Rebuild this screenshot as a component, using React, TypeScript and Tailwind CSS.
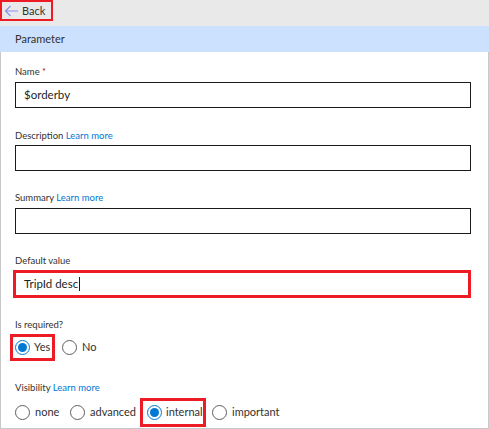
import React from 'react';

const font = { fontFamily: 'Lato, "Open Sans", "Liberation Sans", sans-serif' };

const Radio: React.FC<{ checked?: boolean }> = ({ checked }) => (
    <span
        className={`flex h-[15px] w-[15px] shrink-0 items-center justify-center rounded-full border bg-white ${
            checked ? 'border-[#0078d4]' : 'border-[#605e5c]'
        }`}
    >
        {checked && <span className="h-[9px] w-[9px] rounded-full bg-[#0078d4]" />}
    </span>
);

const Label: React.FC<{ text: string; learn?: boolean; required?: boolean; className?: string }> = ({
    text,
    learn,
    required,
    className,
}) => (
    <div className={`h-[12px] text-[9.5px] leading-[12px] text-[#323130] ${className ?? ''}`}>
        {text}
        {required && <span className="text-[#a4262c]"> *</span>}
        {learn && <span className="text-[#0078d4]"> Learn more</span>}
    </div>
);

const TextBox: React.FC<{ value?: string; className?: string }> = ({ value, className }) => (
    <div
        className={`flex h-[26px] w-[456px] items-center border border-[#1b1b1b] bg-white px-[8px] text-[11.5px] text-[#201f1e] ${className ?? ''}`}
    >
        {value}
    </div>
);

const App: React.FC = () => {
    return (
        <div className="h-[429px] w-[489px] overflow-hidden bg-white" style={font}>
            <div className="h-[26px] bg-[#e9e9e9]">
                <div className="flex h-[21px] w-[53px] items-center border-2 border-[#ed1c24] pl-[2px] text-[11px] text-[#323130]">
                    <svg width="15" height="12" viewBox="0 0 15 12" className="shrink-0">
                        <path d="M14 6H1.5M6.5 1L1.5 6l5 5" fill="none" stroke="#8a8ff0" strokeWidth="1.1" />
                    </svg>
                    <span className="ml-[3px] leading-none">Back</span>
                </div>
            </div>
            <div className="flex h-[26px] items-center bg-[#cce1fe] pl-[15px] text-[11px] text-[#323130]">Parameter</div>
            <div className="h-[377px] border-x border-b border-[#c8c8c8] pl-[14px] pt-[14px]">
                <Label text="Name" required />
                <TextBox value="$orderby" className="mt-[4px]" />

                <Label text="Description" learn className="mt-[22px]" />
                <TextBox className="mt-[3px]" />

                <Label text="Summary" learn className="mt-[21px]" />
                <TextBox className="mt-[4px]" />

                <Label text="Default value" className="mt-[21px]" />
                <div className="mt-[3px] ml-[-2px] flex h-[28px] w-[458px] items-center border-[3px] border-[#ed1c24] bg-white pl-[8px] text-[11.5px] text-[#201f1e]">
                    TripId desc
                    <span className="ml-[1px] h-[14px] border-l border-[#1b1b1b]" />
                </div>

                <Label text="Is required?" className="mt-[21px]" />
                <div className="mt-[3px] flex h-[27px] items-center text-[11px] text-[#323130]">
                    <div className="ml-[-5px] flex h-[27px] w-[45px] items-center border-[3px] border-[#ed1c24] pl-[2px]">
                        <Radio checked />
                        <span className="ml-[4px]">Yes</span>
                    </div>
                    <div className="ml-[7px] flex items-center">
                        <Radio />
                        <span className="ml-[5px]">No</span>
                    </div>
                </div>

                <Label text="Visibility" learn className="mt-[21px]" />
                <div className="mt-[4px] flex h-[29px] items-center text-[11px] text-[#323130]">
                    <div className="flex w-[55px] items-center">
                        <Radio />
                        <span className="ml-[5px]">none</span>
                    </div>
                    <div className="flex w-[70px] items-center">
                        <Radio />
                        <span className="ml-[5px]">advanced</span>
                    </div>
                    <div className="flex h-[29px] w-[66px] items-center border-[3px] border-[#ed1c24] pl-[4px]">
                        <Radio checked />
                        <span className="ml-[4px]">internal</span>
                    </div>
                    <div className="ml-[6px] flex items-center">
                        <Radio />
                        <span className="ml-[5px]">important</span>
                    </div>
                </div>
            </div>
        </div>
    );
};

export default App;
